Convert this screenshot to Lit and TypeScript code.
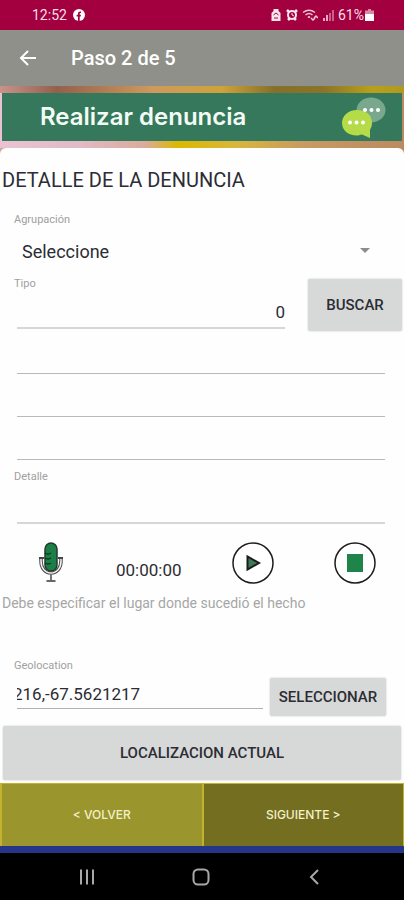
import { LitElement, html, css } from "lit";
import { customElement } from "lit/decorators.js";

@customElement("status-bar")
class StatusBar extends LitElement {
  static styles = css`
    :host {
      display: flex;
      align-items: center;
      height: 30px;
      padding: 0 30px 0 32px;
      background: #a2003e;
      color: #f8dfe8;
      font-size: 14px;
    }
    .left, .right { display: flex; align-items: center; gap: 6px; }
    .right { margin-left: auto; gap: 4px; }
    .charge { display: flex; align-items: center; gap: 1px; }
    svg { display: block; }
  `;
  render() {
    return html`
      <div class="left">
        <span>12:52</span>
        <svg width="12" height="12" viewBox="0 0 12 12" aria-hidden="true">
          <circle cx="6" cy="6" r="6" fill="#fff" />
          <path d="M5 12V7.5H3.7V5.8H5V4.6C5 3 5.9 2.3 8 2.5V4C7 4 6.7 4.1 6.7 4.9V5.8H8L7.7 7.5H6.7V12Z" fill="#a2003e" />
        </svg>
      </div>
      <div class="right">
        <svg width="12" height="12" viewBox="0 0 12 12" aria-hidden="true">
          <path d="M3.5 0h5v2l2 2V12h-9V4l2-2Z" fill="#fbe6ee" />
          <path d="M3.5 6L6 4l2.5 2M4 9h4" stroke="#a2003e" fill="none" />
        </svg>
        <svg width="12" height="12" viewBox="0 0 12 12" aria-hidden="true">
          <path d="M1 1l2 2M11 1L9 3M2 11l2-2M10 11L8 9" stroke="#fbe6ee" stroke-width="2.5" />
          <circle cx="6" cy="6" r="4" fill="none" stroke="#fbe6ee" stroke-width="2" />
          <path d="M6 4v2l2 1" stroke="#fbe6ee" fill="none" />
        </svg>
        <svg width="16" height="12" viewBox="0 0 16 12" aria-hidden="true">
          <path d="M1 3.500Q7 -1 13 3.500M3.500 6Q7 3 10.500 6M6 8.500l1-.8 1 .8" fill="none" stroke="#f3c6d6" stroke-width="1.5" />
          <path d="M9 9l2 2 2-2M12 9l2-2 2 2" fill="none" stroke="#f3c6d6" stroke-width="1.5" />
        </svg>
        <svg width="12" height="12" viewBox="0 0 12 12" aria-hidden="true">
          <path d="M2 9v3M5 6v6" stroke="#e9a9c0" stroke-width="2" />
          <path d="M8 4v8M11 1v11" stroke="#c9608a" stroke-width="2" />
        </svg>
        <span class="charge">
          <span>61%</span>
          <svg width="9" height="12" viewBox="0 0 9 12" aria-hidden="true">
            <path d="M3 0h3v1.5h3V5H0V1.5h3Z" fill="#d887a6" />
            <path d="M0 5h9v7H0Z" fill="#fff" />
          </svg>
        </span>
      </div>
    `;
  }
}

@customElement("system-nav")
class SystemNav extends LitElement {
  static styles = css`
    :host {
      display: flex;
      justify-content: space-between;
      align-items: center;
      height: 54px;
      padding: 0 77px 0 75px;
      background: #000;
      border-top: 7px solid #25368a;
    }
    button { border: 0; padding: 0; background: none; line-height: 0; }
  `;
  render() {
    return html`
      <button aria-label="Recientes">
        <svg width="24" height="20" viewBox="0 0 24 20"><path d="M6 2.5v15M12 2.5v15M18 2.5v15" stroke="#a8a8a8" stroke-width="2" /></svg>
      </button>
      <button aria-label="Inicio">
        <svg width="24" height="20" viewBox="0 0 24 20"><rect x="4.5" y="2.5" width="15" height="15" rx="4.5" fill="none" stroke="#a8a8a8" stroke-width="2" /></svg>
      </button>
      <button aria-label="Volver">
        <svg width="24" height="20" viewBox="0 0 24 20"><path d="M15 3l-7 7 7 7" fill="none" stroke="#a8a8a8" stroke-width="2" /></svg>
      </button>
    `;
  }
}

@customElement("app-root")
class AppRoot extends LitElement {
  static styles = css`
    :host {
      display: flex;
      flex-direction: column;
      min-height: 100vh;
      font-family: Roboto, sans-serif;
      color: #2c2c34;
      background: linear-gradient(90deg, #d2a49b 0%, #dcb55a 45%, #c8b21c 75%, #b98a55 100%);
    }
    * { box-sizing: border-box; }
    button, input, select { font-family: inherit; color: inherit; border-radius: 0; margin: 0; }
    svg { display: block; }

    .appbar {
      display: flex;
      align-items: center;
      gap: 31px;
      height: 56px;
      padding: 0 16px;
      background: #90908a;
      color: #fff;
    }
    .back { border: 0; padding: 0; background: none; }
    .appbar h1 { margin: 0; font-size: 20px; font-weight: 500; }

    .hero {
      padding: 7px 2px;
      background:
        linear-gradient(90deg, #c9938c 0%, #93604c 14%, #cf9a5c 38%, #cfa23a 55%, #84702a 68%, #8a7428 80%, #b8a01a 92%, #b09a20 100%) top / 100% 7px no-repeat,
        linear-gradient(90deg, #eac3d2 0%, #e2b9c6 20%, #d9ac9a 36%, #dcb800 44%, #d8b63c 58%, #c99a62 75%, #bb8a62 100%) bottom / 100% 55px no-repeat;
    }
    .banner {
      display: flex;
      align-items: center;
      justify-content: space-between;
      height: 48px;
      padding: 0 15px 0 38px;
      background: #35785c;
      color: #f4fbf4;
    }
    .banner h2 { margin: 0; font: 600 24px/48px Inter, sans-serif; }

    .card {
      flex: 1;
      padding: 0 2px 3px;
      border-radius: 6px 6px 0 0;
      background: #fefefe;
    }
    .title { margin: 0; padding: 20px 0 21px; font-size: 20px; line-height: 24px; font-weight: 400; }
    .label { display: block; padding-left: 12px; font-size: 11px; line-height: 14px; color: #a0a0a0; }

    .picker { display: flex; align-items: center; margin: 6px 32px 8px 20px; }
    .picker select {
      flex: 1;
      height: 36px;
      padding: 0;
      border: 0;
      appearance: none;
      background: none;
      font-size: 18px;
    }

    .line {
      display: block;
      width: 100%;
      min-width: 0;
      border: 0;
      border-bottom: 2px solid #d6d6d6;
      padding: 0;
      background: none;
      outline: none;
      font-size: 17px;
    }
    .split { display: flex; }
    .split .field { flex: 1; min-width: 0; }
    .split .line { margin-left: 15px; width: calc(100% - 15px); }
    .kind { padding-right: 23px; }
    .kind .line { height: 38px; padding-top: 6px; text-align: right; }
    .stack { padding: 0 17px 0 15px; }
    .stack .line { height: 43px; border-bottom: 1px solid #b9b9b9; }
    .stack.detail .line { height: 40px; border-bottom: 2px solid #d6d6d6; }
    .gap { padding-top: 10px; }

    .flat {
      border: 0;
      background: #d6d9d8;
      box-shadow: 0 0 2px #c4c6c5;
      border-radius: 2px;
      font-size: 15px;
      font-weight: 500;
      padding: 0;
    }
    .search { width: 94px; height: 52px; margin-top: 2px; }

    .recorder {
      display: flex;
      align-items: center;
      padding: 18px 26px 0 35px;
    }
    .tool { border: 0; padding: 0; background: none; }
    .clock { margin: 14px 50px 0 51px; font-size: 17px; line-height: 20px; }
    .stop { margin-left: auto; }
    .hint { margin: 9px 0 46px; font-size: 14px; line-height: 20px; color: #a6a6a6; }

    .geo { padding-right: 16px; gap: 7px; align-items: flex-start; }
    .geo .line { height: 36px; padding-top: 6px; border-bottom: 1px solid #b0b0b0; text-indent: -4px; }
    .choose { width: 116px; height: 38px; margin-top: 19px; }
    .wide { display: block; width: calc(100% - 2px); height: 54px; margin: 10px 1px 0; }

    .steps { display: grid; grid-template-columns: 1fr 1fr; gap: 2px; padding: 1px 1px 0 2px; background: #c3b32c; }
    .steps button {
      height: 62px;
      border: 0;
      background: #9a952d;
      color: #f3f0c8;
      font: 500 12px/16px Inter, sans-serif;
    }
    .steps .next { background: #736e20; }
  `;

  render() {
    return html`
      <status-bar></status-bar>
      <header class="appbar">
        <button class="back" aria-label="Atrás">
          <svg width="24" height="24" viewBox="0 0 24 24"><path d="M20 12H5.500M12 5l-7 7 7 7" fill="none" stroke="#fff" stroke-width="2" /></svg>
        </button>
        <h1>Paso 2 de 5</h1>
      </header>
      <div class="hero">
        <div class="banner">
          <h2>Realizar denuncia</h2>
          <svg width="46" height="44" viewBox="0 0 46 44" aria-hidden="true">
            <ellipse cx="30" cy="15" rx="14.5" ry="12.5" fill="#79a88d" />
            <path d="M16 15C25 15 31 20 31 28C31 32 29 34 29 35V43L21 39.500C19 40 17 40.500 16 40.500C7 40.500 1 35 1 28S7 15 16 15Z" fill="#b5dc48" />
            <g fill="#fff">
              <circle cx="24" cy="15" r="2" /><circle cx="30.5" cy="15" r="2" /><circle cx="37" cy="15" r="2" />
              <circle cx="9" cy="27.5" r="2" /><circle cx="15.5" cy="27.5" r="2" /><circle cx="22" cy="27.5" r="2" />
            </g>
          </svg>
        </div>
      </div>
      <main class="card">
        <h3 class="title">DETALLE DE LA DENUNCIA</h3>
        <label class="label" for="group">Agrupación</label>
        <div class="picker">
          <select id="group"><option>Seleccione</option></select>
          <svg width="10" height="6" viewBox="0 0 10 6" aria-hidden="true"><path d="M0 0h10L5 5Z" fill="#8c8c8c" /></svg>
        </div>
        <div class="split">
          <div class="field kind">
            <label class="label" for="kind">Tipo</label>
            <input class="line" id="kind" value="0" />
          </div>
          <button class="flat search">BUSCAR</button>
        </div>
        <div class="stack">
          <input class="line" aria-label="Tipo, línea 1" />
          <input class="line" aria-label="Tipo, línea 2" />
          <input class="line" aria-label="Tipo, línea 3" />
        </div>
        <label class="label gap" for="detail">Detalle</label>
        <div class="stack detail"><input class="line" id="detail" /></div>
        <div class="recorder">
          <button class="tool" aria-label="Grabar">
            <svg width="28" height="42" viewBox="0 0 28 42">
              <path d="M4 16V19C4 26 8 31 14 31S24 26 24 19V16" fill="none" stroke="#4a4a4a" stroke-width="3.5" />
              <path d="M4 17V19C4 26 8 31 14 31S24 26 24 19V17" fill="none" stroke="#f4f4f4" stroke-width="1.5" />
              <path d="M2 16h5M21 16h5" stroke="#444" stroke-width="2" />
              <path d="M14 32v6" stroke="#777" stroke-width="2" />
              <path d="M9.500 39h9" stroke="#666" stroke-width="2" />
              <rect x="8" y="1" width="12" height="28" rx="6" fill="#1b8048" stroke="#26382e" stroke-width="1.5" />
              <path d="M8 11q3 2 6 0M8 16q3 2 6 0M8 21q3 2 6 0" fill="none" stroke="#12301f" stroke-width="1.5" />
            </svg>
          </button>
          <span class="clock">00:00:00</span>
          <button class="tool" aria-label="Reproducir">
            <svg width="42" height="42" viewBox="0 0 42 42">
              <circle cx="21" cy="21" r="20" fill="#fff" stroke="#1c1c1c" stroke-width="1.5" />
              <path d="M15.500 14.500v13L27 21Z" fill="#3c7a54" stroke="#1c1c1c" stroke-width="2" />
            </svg>
          </button>
          <button class="tool stop" aria-label="Detener">
            <svg width="42" height="42" viewBox="0 0 42 42">
              <circle cx="21" cy="21" r="20" fill="#fff" stroke="#1c1c1c" stroke-width="1.5" />
              <path d="M13 12h16v18H13Z" fill="#1e8449" />
            </svg>
          </button>
        </div>
        <p class="hint">Debe especificar el lugar donde sucedió el hecho</p>
        <div class="split geo">
          <div class="field">
            <label class="label" for="geo">Geolocation</label>
            <input class="line" id="geo" value="216,-67.5621217" />
          </div>
          <button class="flat choose">SELECCIONAR</button>
        </div>
        <button class="flat wide">LOCALIZACION ACTUAL</button>
      </main>
      <div class="steps">
        <button>&lt; VOLVER</button>
        <button class="next">SIGUIENTE &gt;</button>
      </div>
      <system-nav></system-nav>
    `;
  }
}
